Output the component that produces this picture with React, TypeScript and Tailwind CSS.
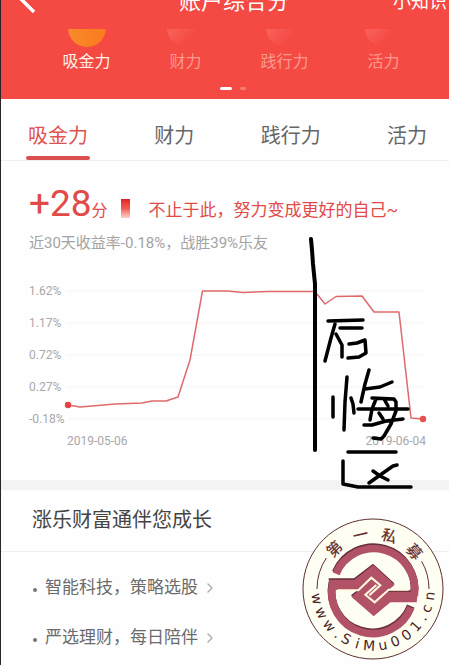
import { ChevronRight } from "lucide-react";

const DIMENSIONS = ["吸金力", "财力", "践行力", "活力"];
const Y_LABELS = ["1.62%", "1.17%", "0.72%", "0.27%", "-0.18%"];
const GRID_LINES = [0, 32, 64, 96, 128];
const SERVICES = ["智能科技，策略选股", "严选理财，每日陪伴"];

/** Characters round the seal: [character, angle in degrees]. */
const SEAL_TOP: [string, number][] = [
  ["第", -44],
  ["一", -13],
  ["私", 17],
  ["募", 48],
];
const SEAL_BOTTOM: [string, number][] = [
  ["w", 80],
  ["w", 65],
  ["w", 50],
  [".", 38],
  ["S", 28],
  ["i", 16],
  ["M", 4],
  ["u", -10],
  ["0", -23],
  ["0", -36],
  ["1", -49],
  [".", -60],
  ["c", -70],
  ["n", -83],
];

function Header() {
  return (
    <header className="h-[99px] overflow-hidden bg-[#f54943] text-white">
      <div className="-mt-3 flex h-[41px] items-start justify-between pl-[18px] pr-[2px]">
        <button type="button" aria-label="返回" className="w-14">
          <svg viewBox="0 0 18 28" className="h-7 w-[18px]" fill="none" stroke="#fff" strokeWidth="3.5">
            <path d="M15 -1 2 11l13 13" />
          </svg>
        </button>
        <h1 className="text-[22px] leading-7">账户综合分</h1>
        <a href="#tips" className="text-[18px] leading-7">
          小知识
        </a>
      </div>
      <div className="grid grid-cols-4 pl-[36px] pr-[16px]">
        {DIMENSIONS.map((name, i) => (
          <div key={name} className={i === 0 ? "text-[#fff3ec]" : "text-[#fb9a8d]"}>
            <div className="flex h-[18px] items-end justify-center overflow-hidden">
              <div
                className={
                  i === 0
                    ? "size-[38px] shrink-0 rounded-full bg-linear-to-r from-[#f98a2a] to-[#fb7a1c]"
                    : "size-[38px] shrink-0 rounded-full bg-linear-to-br from-[#f8605a] from-30% to-[#f54943] to-70%"
                }
              />
            </div>
            <p className="mt-[5px] text-center text-[16px] leading-5">{name}</p>
          </div>
        ))}
      </div>
      <div className="mt-[15px] flex justify-center gap-2 pl-[15px]">
        <span className="h-[3px] w-3 rounded-full bg-white" />
        <span className="h-[3px] w-[6px] rounded-full bg-[#f97a72]" />
      </div>
    </header>
  );
}

function Tabs() {
  return (
    <nav className="flex h-[62px] justify-between border-b border-[#eeeeee] pl-[25px] pr-[10px]">
      {DIMENSIONS.map((name, i) => (
        <button
          key={name}
          type="button"
          className={
            i === 0
              ? "relative w-16 pb-2 pt-5 text-[20px] leading-8 text-[#e0524f]"
              : "w-16 pb-2 pt-5 text-[20px] leading-8 text-[#666666]"
          }
        >
          {name}
          {i === 0 && <span className="absolute inset-x-0 bottom-0 h-1 rounded-full bg-[#dc4f4f]" />}
        </button>
      ))}
    </nav>
  );
}

function Score() {
  return (
    <section className="pl-[28px] pt-5">
      <div className="flex items-baseline whitespace-nowrap text-[#e24a48]">
        <span className="text-[37px] leading-[46px]">+28</span>
        <span className="text-[16px]">分</span>
        <span className="ml-[13px] h-[19px] w-[9px] translate-y-[2px] bg-linear-to-b from-[#e51c1c] via-[#ee5a55] to-[#fbd0cc]" />
        <span className="ml-[19px] text-[17px]">不止于此，努力变成更好的自己~</span>
      </div>
      <p className="mt-1 whitespace-nowrap text-[15px] leading-6 text-[#a3a3a3]">
        近30天收益率-0.18%，战胜39%乐友
      </p>
    </section>
  );
}

function Chart() {
  return (
    <section className="pb-[31px] pl-[28px] pr-[25px] pt-[30px] text-[12px] text-[#a8a8a8]">
      <div className="flex">
        <div className="flex w-[39px] shrink-0 flex-col justify-between leading-3">
          {Y_LABELS.map((label) => (
            <span key={label}>{label}</span>
          ))}
        </div>
        <svg viewBox="0 0 356 128" className="my-[6px] min-w-0 flex-1 overflow-visible" fill="none">
          {GRID_LINES.map((y) => (
            <line key={y} x1="0" x2="356" y1={y} y2={y} stroke="#f4f4f4" />
          ))}
          <path
            d="M0 114l12 2 12-1 23-2 27-1 10-2h14l12-4 12-37L134.500 0H160l15 1.500 25-1h47l10 12.500 11-7.500 26-.5 12 16h25l12 106 12 1"
            stroke="#e0696b"
            strokeWidth="1.500"
            strokeLinejoin="round"
          />
          <circle cx="0" cy="114" r="3.200" fill="#e8413f" />
          <circle cx="355" cy="128" r="3.200" fill="#e8504f" />
        </svg>
      </div>
      <div className="mt-2 flex justify-between pl-[38px] leading-4">
        <span>2019-05-06</span>
        <span className="-mr-[2px]">2019-06-04</span>
      </div>
    </section>
  );
}

function Services() {
  return (
    <section className="border-t-[10px] border-[#f3f3f3]">
      <h2 className="border-b border-[#eeeeee] pb-[15px] pl-[31px] pt-[14px] text-[20px] leading-8 text-[#444444]">
        涨乐财富通伴您成长
      </h2>
      <ul className="pl-[32px] pt-[11px] text-[17px] text-[#6b6b6b]">
        {SERVICES.map((service) => (
          <li key={service}>
            <a href="#service" className="flex h-[50px] items-center">
              <span className="mt-1 size-1 rounded-full bg-[#777777]" />
              <span className="ml-2">{service}</span>
              <ChevronRight className="ml-1 size-4 text-[#aaaaaa]" strokeWidth={2} />
            </a>
          </li>
        ))}
      </ul>
    </section>
  );
}

/** Freehand pen marks over the chart: a vertical line and three written characters. */
function PenMarks() {
  return (
    <svg
      viewBox="300 230 120 264"
      className="pointer-events-none absolute left-[299px] top-[230px] h-[264px] w-[120px]"
      fill="none"
      stroke="#000"
      strokeWidth="3.500"
      strokeLinecap="round"
      strokeLinejoin="round"
    >
      <path strokeWidth="4" d="M311 239l1 11 1 14 2 20v166" />
      <path d="M328 321l35-1M340 328h22M335 324l-4 14-6 23M336 334l6 11v12M349 344l8-1 8-3 1 13-7 4-11 1" />
      <path d="M333 397v20M347 377l-2 25-1 28M351 398l2 6 1 9M369 370l-4 14-4 18M365 389l15-2 12-5" />
      <path d="M376 399l-4 10-2 11M372 398l22 1 2 3v9l-5 13-7 12-3 3-8-1M358 409h50M364 425h8l14-4 17-2M384 399l4 7M379 413l4 6" />
      <path d="M348 452h48M343 461v23l15 3h53M369 483l14-10 10-7 4-1M373 471l7 5 8 4" />
    </svg>
  );
}

/** Two interlocking hooks inside a ring that is open at the left and at the right. */
function Emblem() {
  return (
    <>
      <path
        d="M31 94A123 123 0 0 1 266 160M256 195A123 123 0 0 1 21 125"
        fill="none"
        stroke="currentColor"
        strokeWidth="23"
      />
      <path d="M10 112H86L143 68 207 127 183 148H277L273 180H194L144 222 77 163 101 143H12Z" fill="currentColor" />
    </>
  );
}

function Seal() {
  return (
    <svg viewBox="35 40 426 426" className="absolute left-[301px] top-[518px] size-[142px]" role="img" aria-label="第一私募">
      <circle cx="248" cy="253" r="210" fill="#fffef2" stroke="#5c3030" strokeWidth="3" />
      <path d="M80 253A168 168 0 0 1 108 160M416 253A168 168 0 0 0 394 170" fill="none" stroke="#5c3030" strokeWidth="3" />
      <g transform="translate(105 109)">
        <g className="text-[#632b3c]">
          <Emblem />
        </g>
        <g className="text-[#b25266]" transform="translate(1 4)">
          <Emblem />
        </g>
        <path
          d="M36 148H99L138 110 165 133 132 163M250 146H190L148 184 120 161 153 132"
          fill="none"
          stroke="#fffbe0"
          strokeWidth="6"
        />
      </g>
      <g fill="#6b3434" textAnchor="middle" fontWeight="500">
        {SEAL_TOP.map(([char, angle]) => (
          <text key={char} x="248" y="103" fontSize="46" transform={`rotate(${angle} 248 253)`}>
            {char}
          </text>
        ))}
      </g>
      <g fill="#4a2424" textAnchor="middle" fontFamily="DejaVu Sans, sans-serif">
        {SEAL_BOTTOM.map(([char, angle], i) => (
          <text key={i} x="248" y="438" fontSize="42" transform={`rotate(${angle} 248 253)`}>
            {char}
          </text>
        ))}
      </g>
    </svg>
  );
}

export default function App() {
  return (
    <main className="relative min-h-screen overflow-hidden border-l border-[#2b2326] bg-[#fefefe] font-[Roboto,'Noto_Sans_CJK_SC',sans-serif]">
      <Header />
      <Tabs />
      <Score />
      <Chart />
      <Services />
      <PenMarks />
      <Seal />
    </main>
  );
}
